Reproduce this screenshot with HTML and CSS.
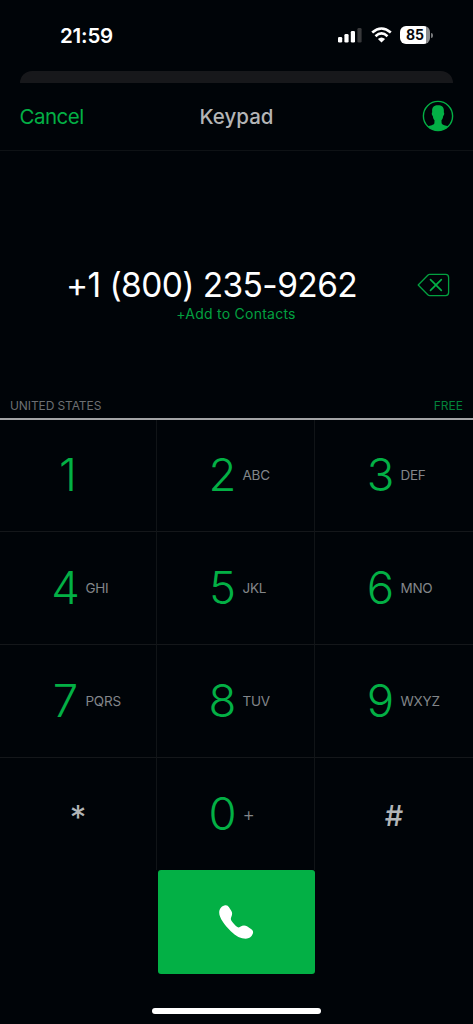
FILE: index.html
```html
<!DOCTYPE html>
<html lang="en">
<head>
<meta charset="utf-8">
<title>Keypad</title>
<link rel="stylesheet" href="styles.css">
</head>
<body>
<div class="screen">
  <div class="status">
    <span class="time">21:59</span>
    <div class="indicators">
      <svg class="signal" width="24" height="16" viewBox="0 0 24 16">
        <rect x="0" y="10" width="4.2" height="5.6" rx="1.3" fill="#fff"/>
        <rect x="6.4" y="7" width="4.2" height="8.6" rx="1.3" fill="#fff"/>
        <rect x="12.8" y="4" width="4.2" height="11.6" rx="1.3" fill="#fff"/>
        <rect x="19.4" y="1" width="4.2" height="14.6" rx="1.3" fill="#38393b"/>
      </svg>
      <svg class="wifi" width="21" height="16" viewBox="0 0 21 16">
        <g fill="none" stroke="#fff" stroke-width="2.6">
          <path d="M1.2 5.6Q10.5 -2.6 19.8 5.6"/>
          <path d="M4.5 9.2Q10.5 3.7 16.5 9.2"/>
        </g>
        <path d="M10.5 15.6L6.9 12Q10.5 8.8 14.1 12Z" fill="#fff"/>
      </svg>
      <div class="battery"><span class="battery-level">85</span></div>
      <span class="battery-tip"></span>
    </div>
  </div>
  <div class="sheet-edge"></div>
  <header class="header">
    <span class="cancel">Cancel</span>
    <span class="title">Keypad</span>
    <svg class="avatar" width="32" height="32" viewBox="0 0 32 32">
      <circle cx="16" cy="16" r="14.6" fill="none" stroke="#03b045" stroke-width="1.4"/>
      <path fill="#03b045" d="M16 5.2C19.8 5.2 22 7 21.9 11L21.8 12.3C22.6 12.8 22.2 15.6 21.2 16C20.9 18.2 20.3 19.4 19.5 20.3L19.6 23.2C20.4 25.2 23.5 25.3 26.3 26.3A14.6 14.6 0 0 1 5.7 26.3C8.5 25.3 11.6 25.2 12.4 23.2L12.5 20.3C11.7 19.4 11.1 18.2 10.8 16C9.8 15.6 9.4 12.8 10.2 12.3L10.1 11C10 7 12.2 5.2 16 5.2Z"/>
    </svg>
  </header>
  <main class="display">
    <div class="entry">
      <div class="number">+1 (800) 235-9262</div>
      <div class="add">+Add to Contacts</div>
    </div>
    <svg class="delete" width="34" height="24" viewBox="0 0 34 24" fill="none" stroke="#03a040">
      <path stroke-width="1.3" stroke-linejoin="round" d="M1.2 12L10.8 2.2Q11.6 1.4 12.7 1.4H28.6Q31.6 1.4 31.6 4.4V19.6Q31.6 22.6 28.6 22.6H12.7Q11.6 22.6 10.8 21.8Z"/>
      <path stroke="#03b045" stroke-width="1.7" stroke-linecap="round" d="M13.5 6.7L24.3 17.3M24.3 6.7L13.5 17.3"/>
    </svg>
  </main>
  <div class="info"><span class="country">UNITED STATES</span><span class="rate">FREE</span></div>
  <div class="keys">
    <div class="key top"><span class="digit one">1</span></div>
    <div class="key top"><span class="digit">2</span><span class="letters">ABC</span></div>
    <div class="key top"><span class="digit">3</span><span class="letters">DEF</span></div>
    <div class="key"><span class="digit">4</span><span class="letters">GHI</span></div>
    <div class="key"><span class="digit">5</span><span class="letters">JKL</span></div>
    <div class="key"><span class="digit">6</span><span class="letters">MNO</span></div>
    <div class="key"><span class="digit">7</span><span class="letters">PQRS</span></div>
    <div class="key"><span class="digit">8</span><span class="letters">TUV</span></div>
    <div class="key"><span class="digit">9</span><span class="letters">WXYZ</span></div>
    <div class="key symbol"><span class="star">*</span></div>
    <div class="key"><span class="digit">0</span><span class="letters plus">+</span></div>
    <div class="key symbol"><span class="hash">#</span></div>
  </div>
  <div class="call">
    <svg width="36" height="36" viewBox="0 0 36 36">
      <path fill="#fff" d="M1.2 8.5C1.2 4.2 4.2 1.6 7.4 1.2C9.2 1 10 1.8 11 3.2L13.4 7C14.6 9 14.2 11 13.2 13.2C12.6 14.6 12.8 15.7 13.8 17.2C15.6 19.8 17.4 21.6 19.4 23.1C20.3 23.7 21.2 23.5 22.2 22.7C24.8 21 27.2 21.2 29 22.3L33 25.1C35 26.6 35.6 27.8 34.8 29.8C33.4 33.2 31 34.6 27.8 34.7C23 34.7 17.8 32.2 12.8 27.2C6.6 21 1.2 14 1.2 8.5Z"/>
    </svg>
  </div>
  <div class="home"></div>
</div>
</body>
</html>
```

FILE: styles.css
```css
* { box-sizing: border-box; }
body { margin: 0; background: #000408; font-family: Inter, sans-serif; }
.screen { width: 473px; height: 1024px; display: flex; flex-direction: column; background: #000408; overflow: hidden; white-space: nowrap; }
.status { height: 71px; display: flex; justify-content: space-between; padding: 0 40px 0 60px; align-items: center; }
.time { font-size: 20.5px; font-weight: 600; color: #fff; letter-spacing: -0.2px; }
.indicators { display: flex; align-items: center; height: 18px; padding-bottom: 1px; }
.wifi { margin-left: 9px; }
.battery { width: 30px; height: 18px; margin-left: 8px; border-radius: 6px; background: linear-gradient(90deg, #fff 26px, #8b8c8e 26px); display: flex; }
.battery-level { width: 30px; text-align: center; font-size: 14px; line-height: 18px; font-weight: 700; color: #05080b; }
.battery-tip { width: 2px; height: 5px; margin-left: 1px; background: #77797b; border-radius: 0 2px 2px 0; }
.sheet-edge { height: 12px; margin: 0 20px; border-radius: 12px 12px 0 0; background: #17181b; }
.header { height: 68px; display: grid; grid-template-columns: 1fr auto 1fr; align-items: center; padding: 0 19px; border-bottom: 1px solid #0e1215; font-size: 20.5px; }
.cancel { color: #03b045; letter-spacing: -0.5px; padding-left: 0.5px; }
.title { color: #b4b5b6; font-weight: 500; }
.avatar { justify-self: end; margin-bottom: 2px; }
.display { height: 239px; display: flex; align-items: flex-start; padding: 114px 22px 0 66px; justify-content: space-between; }
.entry { width: 292px; }
.number { font-size: 33.5px; line-height: 40px; font-weight: 400; color: #fff; letter-spacing: -0.6px; }
.add { font-size: 14px; line-height: 18px; text-align: center; color: #03a040; padding-left: 48px; letter-spacing: 0.25px; }
.delete { margin-top: 8px; }
.info { height: 30px; display: flex; justify-content: space-between; align-items: center; padding: 3px 10px 0; border-bottom: 2px solid #a3a4a6; font-size: 12px; }
.country { color: #6c6f72; letter-spacing: -0.1px; }
.rate { color: #03823a; }
.keys { display: grid; grid-template-columns: 157px 158px 158px; grid-template-rows: 112px 113px 113px 112px; }
.key { display: flex; align-items: center; padding-left: 51px; border-right: 1px solid #101417; border-bottom: 1px solid #14171a; }
.top { padding-bottom: 2px; }
.key:nth-child(3n) { border-right: 0; }
.key:nth-child(n + 10) { border-bottom: 0; }
.digit { width: 29px; display: flex; justify-content: center; font-size: 45.5px; line-height: 56px; font-weight: 300; color: #03b045; }
.one { padding-left: 5px; }
.letters { margin-left: 5.5px; font-size: 13.5px; color: #83868a; font-weight: 400; letter-spacing: -0.25px; }
.symbol { padding: 0; justify-content: center; color: #b2b5b7; }
.star { font-size: 33px; line-height: 38px; padding-top: 5px; }
.hash { font-size: 29px; line-height: 35px; padding-top: 2px; font-weight: 500; }
.plus { font-size: 19px; font-weight: 300; }
.call { width: 157.5px; height: 103.5px; margin: 0 0 0 157.5px; border-radius: 3px; background: #03b045; display: flex; align-items: center; justify-content: center; }
.home { width: 169px; height: 6px; margin: 34.5px 0 0 152px; border-radius: 3px; background: #fff; }
```
